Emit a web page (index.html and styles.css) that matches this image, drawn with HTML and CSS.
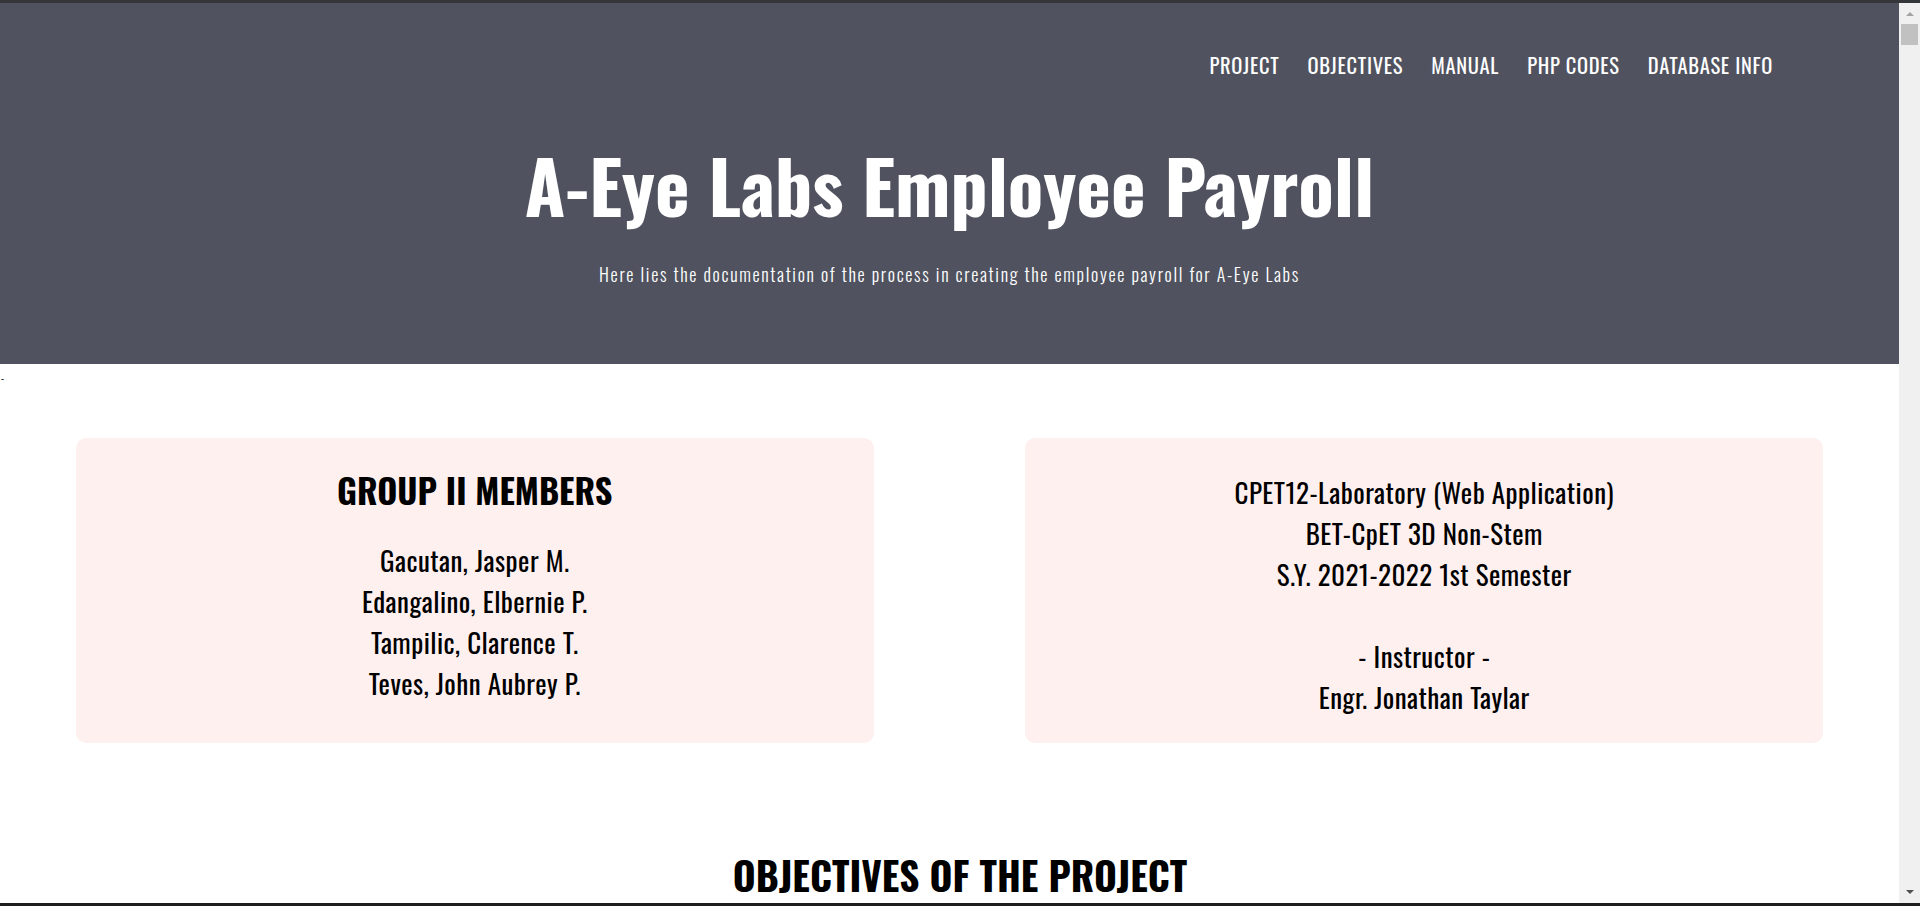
FILE: index.html
```html
<!DOCTYPE html>
<html lang="en">
<head>
<meta charset="utf-8">
<title>A-Eye Labs Employee Payroll</title>
<link rel="stylesheet" href="styles.css">
</head>
<body>
<div class="window">
  <div class="frame-line"></div>
  <div class="viewport">
    <main class="page">
      <header class="hero">
        <nav class="nav">
          <a href="#project">PROJECT</a>
          <a href="#objectives">OBJECTIVES</a>
          <a href="#manual">MANUAL</a>
          <a href="#php">PHP CODES</a>
          <a href="#database">DATABASE INFO</a>
        </nav>
        <h1 class="hero-title">A-Eye Labs Employee Payroll</h1>
        <p class="hero-sub">Here lies the documentation of the process in creating the employee payroll for A-Eye Labs</p>
      </header>
      <div class="stray">-</div>
      <section class="cards" id="project">
        <div class="card card-members">
          <h2 class="card-title">GROUP II MEMBERS</h2>
          <p class="card-text">Gacutan, Jasper M.<br>Edangalino, Elbernie P.<br>Tampilic, Clarence T.<br>Teves, John Aubrey P.</p>
        </div>
        <div class="card card-info">
          <p class="card-text">CPET12-Laboratory (Web Application)<br>BET-CpET 3D Non-Stem<br>S.Y. 2021-2022 1st Semester<br><br>- Instructor -<br>Engr. Jonathan Taylar</p>
        </div>
      </section>
      <section class="objectives" id="objectives">
        <h2 class="section-title">OBJECTIVES OF THE PROJECT</h2>
      </section>
    </main>
    <div class="scrollbar">
      <span class="sb-arrow sb-up"></span>
      <span class="sb-thumb"></span>
      <span class="sb-spacer"></span>
      <span class="sb-arrow sb-down"></span>
    </div>
  </div>
  <div class="frame-line frame-bottom"></div>
</div>
</body>
</html>
```
FILE: styles.css
```css
html, body {
  margin: 0;
  padding: 0;
  height: 906px;
  overflow: hidden;
  background: #ffffff;
  font-family: "Oswald", "Liberation Sans Narrow", sans-serif;
}

.window {
  display: flex;
  flex-direction: column;
  height: 906px;
}

.frame-line {
  height: 3px;
  background: #34363a;
  flex: none;
}

.frame-bottom {
  background: #1f1f1f;
}

.viewport {
  flex: 1;
  display: flex;
  min-height: 0;
}

.page {
  flex: 1;
  min-width: 0;
  overflow: hidden;
}

/* Header */
.hero {
  background: #50535f;
  color: #ffffff;
  height: 361px;
  box-sizing: border-box;
  display: flex;
  flex-direction: column;
  align-items: center;
}

.nav {
  align-self: stretch;
  display: flex;
  justify-content: flex-end;
  gap: 28px;
  padding: 50px 126px 0 0;
}

.nav a {
  color: #ffffff;
  text-decoration: none;
  font-size: 20.5px;
  line-height: 24px;
  letter-spacing: 0.7px;
  font-weight: 400;
}

.hero-title {
  margin: 63px 0 0;
  font-size: 73.6px;
  line-height: 88px;
  font-weight: 700;
}

.hero-sub {
  margin: 33px 0 0;
  font-size: 18px;
  line-height: 27px;
  font-weight: 300;
  letter-spacing: 1.68px;
}

.stray {
  height: 20px;
  padding-top: 4px;
  font-size: 10px;
  line-height: 20px;
  padding-left: 1px;
  color: #000;
}

/* Cards */
.cards {
  display: grid;
  grid-template-columns: 1fr 1fr;
  column-gap: 8.7%;
  padding: 50px 4% 0;
}

.card {
  background: #fff0f0;
  border-radius: 10px;
  text-align: center;
  color: #000;
}

.card-members {
  padding-top: 31px;
}

.card-info {
  padding: 34px 0 25px;
}

.card-title {
  margin: 0;
  font-size: 34.3px;
  line-height: 42px;
  font-weight: 700;
}

.card-text {
  margin: 0;
  font-size: 27px;
  line-height: 41px;
  letter-spacing: 0.45px;
  font-weight: 400;
}

.card-members .card-text {
  margin-top: 29px;
}

/* Objectives */
.objectives {
  padding: 107px 0 0 21px;
  text-align: center;
}

.section-title {
  margin: 0;
  font-size: 39.2px;
  line-height: 48px;
  font-weight: 700;
  color: #000;
}

/* Scrollbar */
.scrollbar {
  width: 21px;
  flex: none;
  background: #f0f0f0;
  display: flex;
  flex-direction: column;
  align-items: center;
}

.sb-arrow {
  width: 0;
  height: 0;
  border-left: 4px solid transparent;
  border-right: 4px solid transparent;
  flex: none;
}

.sb-up {
  margin-top: 9px;
  border-bottom: 4px solid #a3a3a3;
}

.sb-down {
  margin-bottom: 9px;
  border-top: 4px solid #505050;
}

.sb-thumb {
  margin-top: 8px;
  width: 17px;
  height: 21px;
  background: #c1c1c1;
  flex: none;
}

.sb-spacer {
  flex: 1;
}
```
